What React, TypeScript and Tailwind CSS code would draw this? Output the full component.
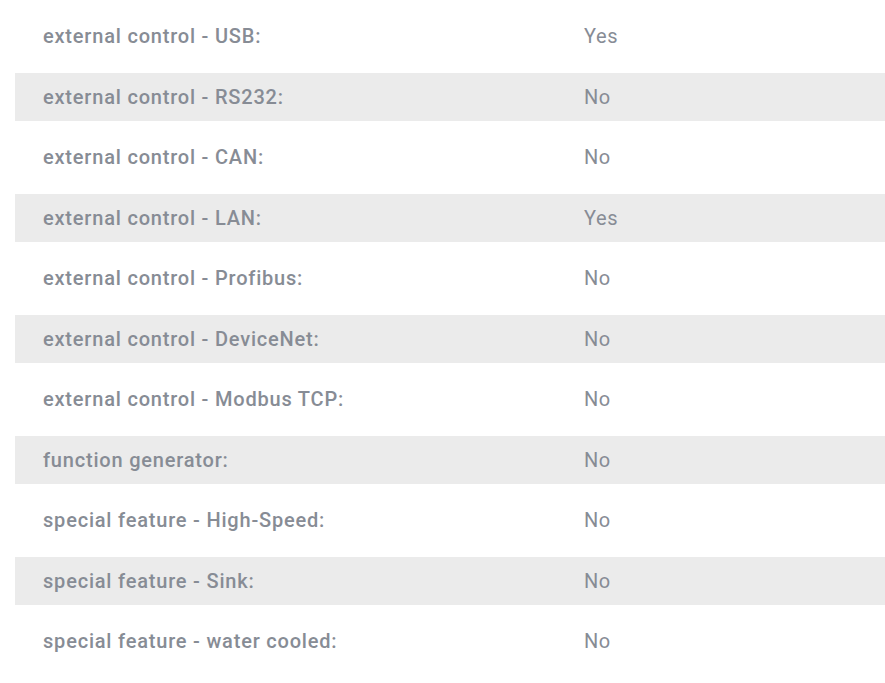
const rows = [
  { label: "external control - USB:", value: "Yes" },
  { label: "external control - RS232:", value: "No" },
  { label: "external control - CAN:", value: "No" },
  { label: "external control - LAN:", value: "Yes" },
  { label: "external control - Profibus:", value: "No" },
  { label: "external control - DeviceNet:", value: "No" },
  { label: "external control - Modbus TCP:", value: "No" },
  { label: "function generator:", value: "No" },
  { label: "special feature - High-Speed:", value: "No" },
  { label: "special feature - Sink:", value: "No" },
  { label: "special feature - water cooled:", value: "No" },
];

export default function App() {
  return (
    <div className="min-h-[683px] w-[885px] bg-white pl-[15px] pt-[12.5px] font-['Roboto',sans-serif] text-[20px] tracking-[0.6px] text-[#878c95]">
      <div className="flex flex-col gap-[12.5px]">
        {rows.map((row, i) => (
          <div
            key={row.label}
            className={
              "grid h-12 grid-cols-[541px_1fr] items-center pb-px pl-7 " +
              (i % 2 === 1 ? "bg-[#ebebeb]" : "")
            }
          >
            <span className="font-medium tracking-[0.8px]">{row.label}</span>
            <span>{row.value}</span>
          </div>
        ))}
      </div>
    </div>
  );
}
